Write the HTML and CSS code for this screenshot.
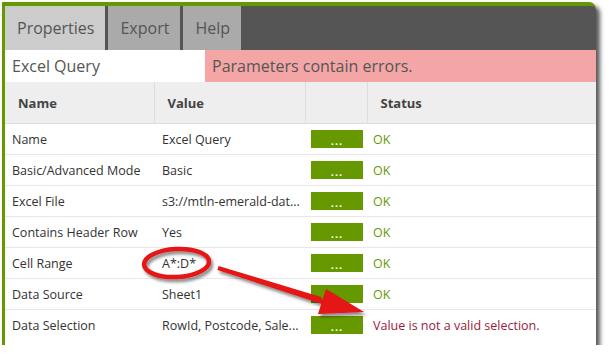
FILE: index.html
```html
<!DOCTYPE html>
<html lang="en">
<head>
    <meta charset="UTF-8">
    <meta name="viewport" content="width=device-width, initial-scale=1.0">
    <title>Excel Query Properties</title>
    <link rel="stylesheet" href="styles.css">
</head>
<body>

    <!-- Component properties panel -->
    <div class="panel">
        <div class="tabs">
            <div class="tab active">Properties</div>
            <div class="tab">Export</div>
            <div class="tab">Help</div>
        </div>

        <div class="titlebar">
            <div class="title">Excel Query</div>
            <div class="error-banner">Parameters contain errors.</div>
        </div>

        <table class="props">
            <colgroup>
                <col class="col-name">
                <col class="col-value">
                <col class="col-edit">
                <col>
            </colgroup>
            <thead>
                <tr>
                    <th>Name</th>
                    <th>Value</th>
                    <th></th>
                    <th>Status</th>
                </tr>
            </thead>
            <tbody>
                <tr>
                    <td>Name</td>
                    <td>Excel Query</td>
                    <td><span class="edit-btn">...</span></td>
                    <td class="ok">OK</td>
                </tr>
                <tr>
                    <td>Basic/Advanced Mode</td>
                    <td>Basic</td>
                    <td><span class="edit-btn">...</span></td>
                    <td class="ok">OK</td>
                </tr>
                <tr>
                    <td>Excel File</td>
                    <td>s3://mtln-emerald-dat...</td>
                    <td><span class="edit-btn">...</span></td>
                    <td class="ok">OK</td>
                </tr>
                <tr>
                    <td>Contains Header Row</td>
                    <td>Yes</td>
                    <td><span class="edit-btn">...</span></td>
                    <td class="ok">OK</td>
                </tr>
                <tr>
                    <td>Cell Range</td>
                    <td>A*:D*</td>
                    <td><span class="edit-btn">...</span></td>
                    <td class="ok">OK</td>
                </tr>
                <tr>
                    <td>Data Source</td>
                    <td>Sheet1</td>
                    <td><span class="edit-btn">...</span></td>
                    <td class="ok">OK</td>
                </tr>
                <tr>
                    <td>Data Selection</td>
                    <td>RowId, Postcode, Sale...</td>
                    <td><span class="edit-btn">...</span></td>
                    <td class="bad">Value is not a valid selection.</td>
                </tr>
            </tbody>
        </table>
    </div>

    <!-- Red callout drawn over the screenshot -->
    <svg class="callout" width="609" height="360" viewBox="0 0 609 360">
        <defs>
            <filter id="drop" x="-20%" y="-20%" width="140%" height="140%">
                <feDropShadow dx="2" dy="3" stdDeviation="1.5" flood-color="#000" flood-opacity="0.45"/>
            </filter>
        </defs>
        <g filter="url(#drop)">
            <ellipse cx="176.5" cy="263" rx="32.5" ry="14" fill="none" stroke="#e51212" stroke-width="4.5" transform="rotate(-3 176.5 263)"/>
            <polygon points="218.6,266 217.4,270 323.5,304.5 321,297" fill="#e51212"/>
            <polygon points="364,312 326,289 318,314" fill="#e51212"/>
        </g>
    </svg>

</body>
</html>
```

FILE: styles.css
```css
/* Page */
body {
    margin: 0;
    background-color: #fff;
    font-family: "Open Sans", Arial, sans-serif;
}

/* Panel with the green frame and drop shadow */
.panel {
    margin: 2px 0 0 2px;
    width: 591px;
    border-top: 4px solid #669900;
    border-left: 3px solid #669900;
    border-top-right-radius: 7px;
    background-color: #fff;
    padding-bottom: 5px;
    box-shadow: 4px 4px 4px rgba(0, 0, 0, 0.65);
}

/* Tab strip */
.tabs {
    display: flex;
    height: 44px;
    background-color: #555;
    border-top-right-radius: 4px;
}

.tab {
    display: flex;
    align-items: center;
    padding: 0 11px 0 12px;
    margin-right: 3px;
    background-color: #aaa;
    color: #555;
    font-size: 16px;
}

.tab.active {
    background-color: #ccc;
}

/* Component name + error message */
.titlebar {
    display: flex;
    height: 32px;
    font-size: 16px;
    color: #555;
}

.title {
    width: 193px;
    padding-left: 7px;
    display: flex;
    align-items: center;
}

.error-banner {
    flex: 1;
    background-color: #f4a6a6;
    padding-left: 7px;
    display: flex;
    align-items: center;
}

/* Properties table */
.props {
    width: 100%;
    border-collapse: collapse;
    table-layout: fixed;
    font-size: 12.5px;
    color: #333;
}

.col-name { width: 149px; }
.col-value { width: 151px; }
.col-edit { width: 62px; }

.props th {
    height: 41px;
    padding: 0 0 0 13px;
    text-align: left;
    background-color: #eee;
    color: #444;
    font-size: 13px;
    font-weight: bold;
    border-right: 1px solid #ddd;
    border-bottom: 1px solid #ddd;
}

.props th:last-child {
    border-right: none;
}

.props td {
    height: 30px;
    padding: 0 0 0 7px;
    border-bottom: 1px solid #e8e8e8;
    white-space: nowrap;
    overflow: hidden;
}

.props td:nth-child(2) {
    padding-left: 8px;
}

.props td:nth-child(3),
.props td:nth-child(4) {
    padding-left: 6px;
}

.props tbody tr:last-child td {
    border-bottom: none;
}

/* Green "..." edit button */
.edit-btn {
    display: flex;
    justify-content: center;
    align-items: flex-end;
    width: 52px;
    height: 18px;
    box-sizing: border-box;
    padding-bottom: 2px;
    background-color: #669900;
    color: #fff;
    font-size: 11px;
    font-weight: bold;
    line-height: 1;
    letter-spacing: 1px;
}

.ok {
    color: #669900;
}

.bad {
    color: #9b1b3b;
}

/* Annotation overlay */
.callout {
    position: absolute;
    top: 0;
    left: 0;
    pointer-events: none;
}
```
